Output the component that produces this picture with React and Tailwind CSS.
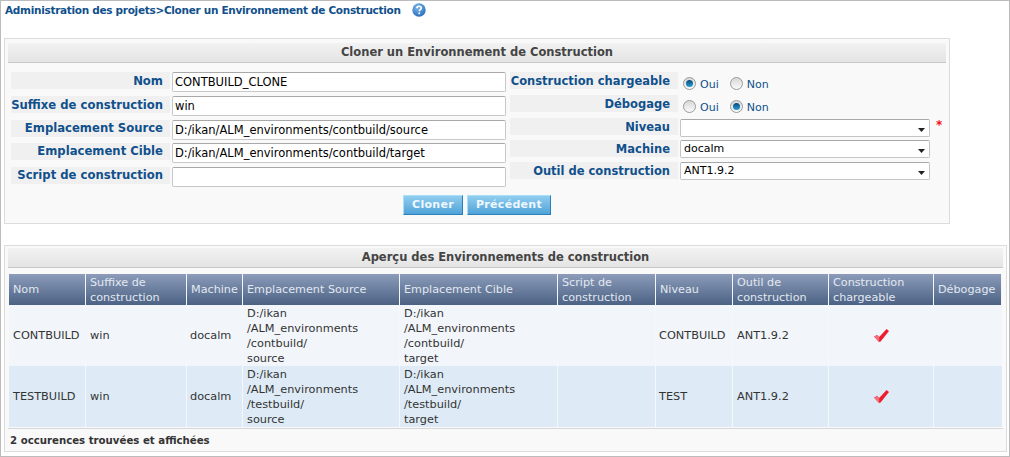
const font = { fontFamily: '"DejaVu Sans", Verdana, sans-serif' };

const leftRows = [
  { label: 'Nom', value: 'CONTBUILD_CLONE', mb: 'mb-[4px]', lead: 'leading-[18px]' },
  { label: 'Suffixe de construction', value: 'win', mb: 'mb-[4px]', lead: 'leading-[18px]' },
  { label: 'Emplacement Source', value: 'D:/ikan/ALM_environments/contbuild/source', mb: 'mb-[3px]', lead: 'leading-[16px]' },
  { label: 'Emplacement Cible', value: 'D:/ikan/ALM_environments/contbuild/target', mb: 'mb-[4px]', lead: 'leading-[16px]' },
  { label: 'Script de construction', value: '', mb: 'mb-0', lead: 'leading-[16px]' },
];

const tableHead = [
  ['Nom', 'w-[77px]'],
  ['Suffixe de construction', 'w-[101px]'],
  ['Machine', 'w-[56px]'],
  ['Emplacement Source', 'w-[157px]'],
  ['Emplacement Cible', 'w-[158px]'],
  ['Script de construction', 'w-[98px]'],
  ['Niveau', 'w-[77px]'],
  ['Outil de construction', 'w-[96px]'],
  ['Construction chargeable', 'w-[105px]'],
  ['Débogage', 'w-[68px]'],
];

const tableRows = [
  { name: 'CONTBUILD', folder: 'contbuild', level: 'CONTBUILD', bg: 'bg-[#f2f6fb]' },
  { name: 'TESTBUILD', folder: 'testbuild', level: 'TEST', bg: 'bg-[#deebf6]' },
];

function Label({ children, className = '' }) {
  return (
    <div className={`h-[17px] bg-[#f0f0f0] text-right font-bold text-[#10508c] whitespace-nowrap ${className}`}>
      {children}
    </div>
  );
}

function Radio({ checked, label }) {
  return (
    <span className="flex h-[15px] items-center">
      <span className="flex h-[13px] w-[13px] items-center justify-center rounded-full border border-[#9a9a9a] bg-gradient-to-b from-[#d8d8d8] to-[#fafafa]">
        {checked && <span className="h-[7px] w-[7px] rounded-full bg-gradient-to-b from-[#0a4a78] to-[#2aa0d8]" />}
      </span>
      <span className="ml-[4px] mt-[2px] text-[11px] leading-[13px] text-[#10508c]">{label}</span>
    </span>
  );
}

function Select({ value, mb }) {
  return (
    <div className={`flex h-[18px] w-[250px] items-center justify-between rounded-[2px] border border-[#c4c4c8] border-t-[#a8a8a8] bg-white pl-[3px] pr-[4px] text-[11px] text-black ${mb}`}>
      <span>{value}</span>
      <svg width="7" height="4" viewBox="0 0 7 4" className="mt-[3px]"><path d="M0 0h7L3.5 4z" fill="#222" /></svg>
    </div>
  );
}

function PanelTitle({ children }) {
  return (
    <div className="h-[20px] border-b border-[#c8c8c8] bg-gradient-to-b from-[#f2f2f2] to-[#e4e4e4] text-center text-[11.5px] leading-[19px] font-bold text-[#444]">
      {children}
    </div>
  );
}

function Btn({ children, className }) {
  return (
    <button className={`h-[20px] border-t border-l border-t-[#a8e0f8] border-l-[#a8e0f8] border-r border-b border-r-[#2a80b8] border-b-[#2a80b8] bg-gradient-to-b from-[#90cdef] to-[#4fa3d8] text-[11px] leading-[16px] font-bold tracking-[0.3px] text-[#eef8ff] ${className}`}>
      {children}
    </button>
  );
}

function HelpIcon() {
  return (
    <svg width="14" height="14" viewBox="0 0 14 14">
      <defs>
        <radialGradient id="help" cx="40%" cy="30%" r="80%">
          <stop offset="0" stopColor="#7db8ea" />
          <stop offset="1" stopColor="#1f67b5" />
        </radialGradient>
      </defs>
      <circle cx="7" cy="7" r="6.7" fill="url(#help)" />
      <path d="M4.8 5.2c.1-1.4 1.1-2 2.3-2 1.3 0 2.2.8 2.2 1.9 0 1.6-2 1.6-2 3.2" fill="none" stroke="#fff" strokeWidth="1.6" />
      <rect x="6.4" y="9.5" width="1.7" height="1.7" fill="#fff" />
    </svg>
  );
}

function Check() {
  return (
    <svg width="15" height="13" viewBox="0 0 15 13" className="mx-auto">
      <path d="M0 7.6l3.2-1.5 2 2L12.6 0 15 2 6.6 12.6 5 13z" fill="#ee1c2e" />
      <path d="M0 7.6l3.2-1.5 2 2v4.9z" fill="#f0707c" />
    </svg>
  );
}

function PathCell({ folder, leaf }) {
  return (
    <td className="border-r border-[#f4f7fb] px-[4px] pt-[1px] align-middle leading-[15px]">
      D:/ikan
      <br />
      /ALM_environments
      <br />
      /{folder}/
      <br />
      {leaf}
    </td>
  );
}

export default function App() {
  return (
    <div style={font} className="h-[457px] w-[1010px] overflow-hidden border border-[#bcbcbc] bg-white pl-[3px] text-[11px]">
      <div className="flex h-[20px] items-start pl-[1px] pt-[2px]">
        <span className="text-[10.5px] leading-[14px] font-bold tracking-[-0.3px] text-[#10508c]">
          Administration des projets&gt;Cloner un Environnement de Construction
        </span>
        <span className="ml-[11px]"><HelpIcon /></span>
      </div>

      <div className="mt-[17px] h-[186px] w-[946px] border border-[#dcdcdc] bg-[#f9f9f9] px-[3px] pt-[4px]">
        <PanelTitle>Cloner un Environnement de Construction</PanelTitle>

        <div className="mt-[9px] flex">
          <div className="ml-[3px] w-[495px]">
            {leftRows.map((row) => (
              <div key={row.label} className={`flex items-start ${row.mb}`}>
                <Label className={`w-[159px] pr-[7px] text-[11.65px] ${row.lead}`}>{row.label}</Label>
                <input
                  readOnly
                  value={row.value}
                  className="ml-[2px] h-[20px] w-[334px] rounded-[2px] border border-[#c8c8cc] border-t-[#a8a8a8] bg-white px-[2px] text-[11.5px] text-black outline-none"
                />
              </div>
            ))}
          </div>

          <div className="ml-[4px] flex">
            <div className="w-[168px]">
              <Label className="mb-[6px] pr-[8px] text-[11.5px] leading-[18px]">Construction chargeable</Label>
              <Label className="mb-[6px] pr-[8px] text-[11.5px] leading-[18px]">Débogage</Label>
              <Label className="mb-[5px] pr-[8px] text-[11.5px] leading-[18px]">Niveau</Label>
              <Label className="mb-[5px] pr-[8px] text-[11.5px] leading-[18px]">Machine</Label>
              <Label className="pr-[8px] text-[11.5px] leading-[18px]">Outil de construction</Label>
            </div>
            <div className="ml-[2px] pt-[4px]">
              <div className="ml-[3px] mb-[8px] flex gap-[11px]">
                <Radio checked label="Oui" />
                <Radio label="Non" />
              </div>
              <div className="ml-[3px] mb-[5px] flex gap-[11px]">
                <Radio label="Oui" />
                <Radio checked label="Non" />
              </div>
              <div className="flex items-start">
                <Select value="" mb="mb-[3px]" />
                <span className="ml-[6px] text-[12px] leading-[12px] font-bold text-[#f01020]">*</span>
              </div>
              <Select value="docalm" mb="mb-[4px]" />
              <Select value="ANT1.9.2" mb="mb-0" />
            </div>
          </div>
        </div>

        <div className="mt-[8px] flex justify-center gap-[4px]">
          <Btn className="w-[60px]">Cloner</Btn>
          <Btn className="w-[84px]">Précédent</Btn>
        </div>
      </div>

      <div className="mt-[21px] h-[207px] w-[1003px] border border-[#dcdcdc] bg-[#f9f9f9] px-[3px] pt-[2px]">
        <PanelTitle>Aperçu des Environnements de construction</PanelTitle>

        <table className="ml-[1px] mt-[6px] table-fixed border-separate border-spacing-0 text-[11.3px] text-[#333]">
          <thead>
            <tr className="h-[31px] bg-gradient-to-b from-[#8c9cba] to-[#4c6284]">
              {tableHead.map(([name, width]) => (
                <th key={name} className={`${width} border-r border-[#f2f6fb] px-[4px] text-left text-[11.2px] leading-[15px] font-normal text-[#e2e8f0]`}>
                  {name}
                </th>
              ))}
            </tr>
          </thead>
          <tbody>
            {tableRows.map((row) => (
              <tr key={row.name} className={`h-[61px] ${row.bg}`}>
                <td className="border-r border-[#f4f7fb] px-[4px] pt-[1px]">{row.name}</td>
                <td className="border-r border-[#f4f7fb] px-[4px] pt-[1px]">win</td>
                <td className="border-r border-[#f4f7fb] px-[3px] pt-[1px]">docalm</td>
                <PathCell folder={row.folder} leaf="source" />
                <PathCell folder={row.folder} leaf="target" />
                <td className="border-r border-[#f4f7fb]" />
                <td className="border-r border-[#f4f7fb] px-[3px] pt-[1px]">{row.level}</td>
                <td className="border-r border-[#f4f7fb] px-[4px] pt-[1px]">ANT1.9.2</td>
                <td className="border-r border-[#f4f7fb]"><Check /></td>
                <td />
              </tr>
            ))}
          </tbody>
        </table>

        <div className="mt-[1px] border-t border-[#d8d8d8] pl-[2px] pt-[5px] text-[10.2px] leading-[14px] font-bold text-[#333]">
          2 occurences trouvées et affichées
        </div>
      </div>
    </div>
  );
}
